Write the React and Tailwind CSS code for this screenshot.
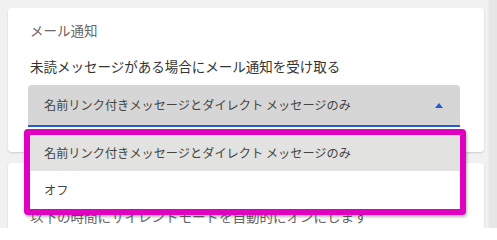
import React from 'react'

const font = { fontFamily: '"Noto Sans CJK JP", "Noto Sans", sans-serif' }

export default function App() {
  const options = ['名前リンク付きメッセージとダイレクト メッセージのみ', 'オフ']
  return (
    <div className="w-[497px] h-[228px] overflow-hidden bg-[#f1f1f1] flex relative" style={font}>
      <div className="flex-1 pl-2 pr-1 pt-2 flex flex-col gap-[11px]">
        <div className="bg-white rounded-sm shadow-[0_1px_2px_rgba(0,0,0,0.15)] px-5 pt-3 pb-[25px]">
          <div className="text-[13.5px] leading-5 text-[#666] ml-0.5">メール通知</div>
          <div className="text-[13.5px] leading-5 text-[#333] ml-0.5 mt-4">未読メッセージがある場合にメール通知を受け取る</div>
          <div className="mt-[9px] mr-1 h-[42px] bg-[#d6d6d6] rounded-t-[4px] border-b-2 border-[#1e5fd0] flex items-center pl-4 pr-[17px]">
            <span className="flex-1 text-[12.2px] text-[#444]">{options[0]}</span>
            <svg width="8" height="5" viewBox="0 0 8 5"><path d="M0 5 L4 0 L8 5 Z" fill="#1e5fd0" /></svg>
          </div>
        </div>
        {/* the heading of this card sits under the open menu */}
        <div className="bg-white rounded-sm shadow-[0_1px_2px_rgba(0,0,0,0.15)] px-5 pt-[43px] pb-4 flex-1">
          <div className="text-[13.5px] leading-5 text-[#666] ml-0.5">以下の時間にサイレントモードを自動的にオンにします</div>
        </div>
      </div>
      <div className="w-[9px] bg-[#e6e6e6] border-l border-[#ececec]" />
      <div className="absolute left-[24px] top-[129px] w-[442px] border-[6px] border-[#e000c0] rounded-[4px] bg-white shadow-[1px_2px_3px_rgba(0,0,0,0.3)] overflow-hidden">
        <div className="h-[36px] bg-[#e2e2e0] flex items-center pl-[14px] text-[12.2px] text-[#444]">{options[0]}</div>
        <div className="h-[38px] bg-white flex items-center pl-[14px] text-[12.2px] text-[#444]">{options[1]}</div>
      </div>
    </div>
  )
}
